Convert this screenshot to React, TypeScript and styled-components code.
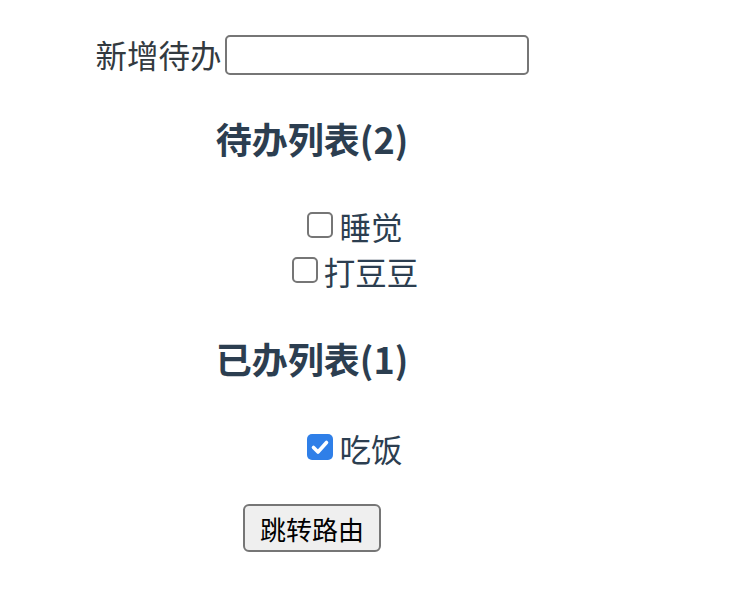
import React, { useState } from "react";
import styled, { createGlobalStyle } from "styled-components";

const Global = createGlobalStyle`
  html, body { margin: 0; padding: 0; background: #ffffff; }
  body {
    font-family: "Noto Sans CJK SC", "Noto Sans", "Liberation Sans", sans-serif;
    color: #2c3e50;
  }
`;

const Page = styled.div`
  width: 624px;
  padding-top: 35px;
  text-align: center;
  display: flex;
  flex-direction: column;
  align-items: center;
`;

const AddRow = styled.div`
  display: flex;
  align-items: center;
  height: 40px;
  font-size: 31.5px;
  color: #333a40;
`;

const AddLabel = styled.span`
  line-height: 40px;
  margin: 0 3px 3px 0;
`;

const TextInput = styled.input`
  box-sizing: border-box;
  width: 304px;
  height: 40px;
  border: 2px solid #767676;
  border-radius: 5px;
  background: #fff;
  padding: 2px 4px;
  font-size: 26px;
  outline: none;
`;

const Heading = styled.h3<{ $top: number }>`
  margin: ${(p) => p.$top}px 0 0;
  font-size: 36px;
  line-height: 44px;
  font-weight: 700;
  color: #2c3e50;
`;

const List = styled.ul<{ $top: number }>`
  list-style: none;
  margin: ${(p) => p.$top}px 0 0;
  padding: 0 0 0 86px;
  display: flex;
  flex-direction: column;
  align-items: center;
`;

const Item = styled.li`
  height: 45px;
  display: flex;
  align-items: center;
  justify-content: center;
`;

const ItemLabel = styled.label`
  display: inline-flex;
  align-items: center;
  font-size: 31.5px;
  line-height: 45px;
  color: #2c3e50;
  cursor: pointer;
`;

const Check = styled.input.attrs({ type: "checkbox" })`
  appearance: none;
  -webkit-appearance: none;
  box-sizing: border-box;
  width: 26px;
  height: 26px;
  margin: 0 6px 4px 0;
  border: 2px solid #767676;
  border-radius: 5px;
  background: #fff;
  cursor: pointer;
  &:checked {
    border: none;
    background-color: #2f7fe8;
    background-image: url("data:image/svg+xml;utf8,<svg xmlns='http://www.w3.org/2000/svg' viewBox='0 0 26 26'><path d='M6.5 13.5 L11 18 L19.5 8.5' fill='none' stroke='white' stroke-width='3.6' stroke-linecap='round' stroke-linejoin='round'/></svg>");
    background-size: 100% 100%;
  }
`;

const JumpButton = styled.button`
  box-sizing: border-box;
  margin-top: 33px;
  width: 138px;
  height: 48px;
  border: 2px solid #767676;
  border-radius: 6px;
  background: #efefef;
  color: #000;
  font-family: "Noto Sans CJK SC", sans-serif;
  font-size: 26px;
  padding: 0;
  cursor: pointer;
`;

type Todo = { id: number; title: string; done: boolean };

export default function App() {
  const [todos, setTodos] = useState<Todo[]>([
    { id: 1, title: "睡觉", done: false },
    { id: 2, title: "打豆豆", done: false },
    { id: 3, title: "吃饭", done: true },
  ]);
  const [text, setText] = useState("");

  const toggle = (id: number) =>
    setTodos((ts) => ts.map((t) => (t.id === id ? { ...t, done: !t.done } : t)));

  const pending = todos.filter((t) => !t.done);
  const done = todos.filter((t) => t.done);

  return (
    <>
      <Global />
      <Page>
        <AddRow>
          <AddLabel>新增待办</AddLabel>
          <TextInput
            value={text}
            onChange={(e) => setText(e.target.value)}
            onKeyDown={(e) => {
              if (e.key === "Enter" && text.trim()) {
                setTodos((ts) => [...ts, { id: Date.now(), title: text.trim(), done: false }]);
                setText("");
              }
            }}
          />
        </AddRow>
        <Heading $top={41}>待办列表({pending.length})</Heading>
        <List $top={44}>
          {pending.map((t) => (
            <Item key={t.id}>
              <ItemLabel>
                <Check checked={t.done} onChange={() => toggle(t.id)} />
                {t.title}
              </ItemLabel>
            </Item>
          ))}
        </List>
        <Heading $top={42}>已办列表({done.length})</Heading>
        <List $top={46}>
          {done.map((t) => (
            <Item key={t.id}>
              <ItemLabel>
                <Check checked={t.done} onChange={() => toggle(t.id)} />
                {t.title}
              </ItemLabel>
            </Item>
          ))}
        </List>
        <JumpButton>跳转路由</JumpButton>
      </Page>
    </>
  );
}
